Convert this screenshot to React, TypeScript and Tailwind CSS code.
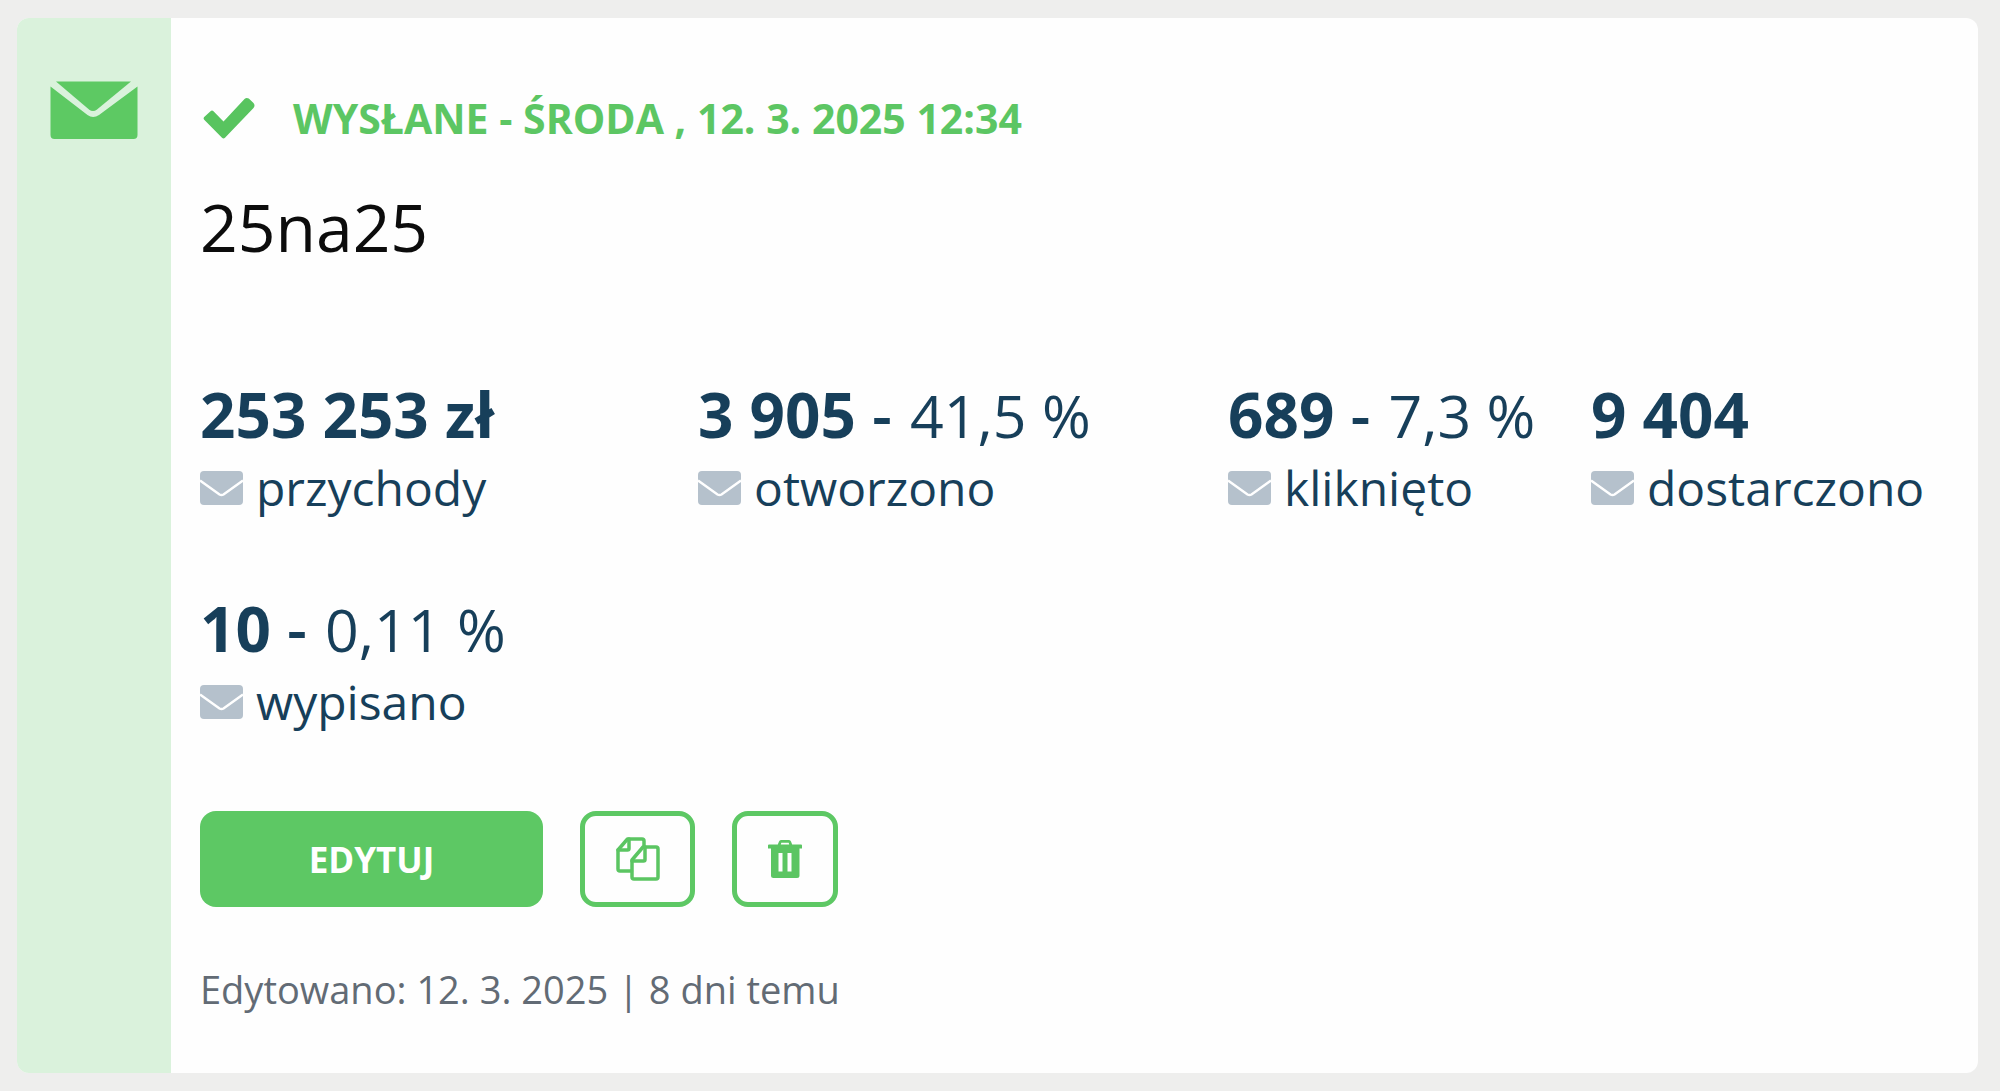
type Stat = { value: string; share?: string; label: string };

const stats: Stat[] = [
  { value: "253 253 zł", label: "przychody" },
  { value: "3 905", share: "41,5 %", label: "otworzono" },
  { value: "689", share: "7,3 %", label: "kliknięto" },
  { value: "9 404", label: "dostarczono" },
  { value: "10", share: "0,11 %", label: "wypisano" },
];

function CampaignIcon() {
  return (
    <svg className="h-[58px] w-[88px]" viewBox="0 0 88 58" fill="#5dc963" aria-hidden="true">
      <path d="M6 0.500H81L47 28.500Q43 31.500 39 28.500Z" />
      <path d="M0.500 5.500L37.500 34Q43 38 49 34L87.500 5.500V54Q87.500 58 83.500 58H4.500Q0.500 58 0.500 54Z" />
    </svg>
  );
}

function EnvelopeIcon() {
  return (
    <svg className="h-[34px] w-[43px] shrink-0" viewBox="0 0 43 34" aria-hidden="true">
      <rect width="43" height="34" rx="4" fill="#b5c1cc" />
      <path d="M0 9.500L19.500 23.500Q21.500 24.600 23.500 23.500L43 9.500" fill="none" stroke="#fff" strokeWidth="2.500" />
    </svg>
  );
}

function CheckIcon() {
  return (
    <svg className="h-[42px] w-[53px]" viewBox="0 0 53 42" fill="#58c45f" aria-hidden="true">
      <path d="M2.200 20L8.500 14.200Q10 12.800 11.500 14.200L21.500 24.500L42.500 2Q44.500 0 46.800 1.600L51.500 6Q53.500 8.500 51.500 11L23 40.800Q21.500 42.300 20 40.800L2.200 22.800Q1 21.300 2.200 20Z" />
    </svg>
  );
}

function CopyIcon() {
  return (
    <svg className="h-11 w-11" viewBox="0 0 44 44" fill="none" stroke="#5bc562" strokeWidth="3.500" strokeLinejoin="round" strokeLinecap="round" aria-hidden="true">
      <path d="M15.500 34H4Q2 34 2 32V13L11.500 2H26Q28 2 28 4V9.500" />
      <path d="M13 2V11.500Q13 13 11.500 13H2" />
      <path d="M27 10H40Q42 10 42 12V40Q42 42 40 42H18Q16 42 16 40V23Z" />
      <path d="M29 10V22.500Q29 24 27.500 24H16" />
    </svg>
  );
}

function TrashIcon() {
  return (
    <svg className="h-[38px] w-[34px]" viewBox="0 0 34 38" fill="#5bc562" aria-hidden="true">
      <path
        fillRule="evenodd"
        d="M13 0H21Q22.500 0 23 1.500L24.200 4.500H33Q34 4.500 34 5.500V8.500H31.500V35.500Q31.500 38 29 38H5.500Q3 38 3 35.500V8.500H0V5.500Q0 4.500 1 4.500H9.800L11 1.500Q11.500 0 13 0ZM13.300 2.800L12.800 4.500H21.200L20.700 2.800ZM10.500 13V31.500H14.500V13ZM19.500 13V31.500H23.500V13Z"
      />
    </svg>
  );
}

function StatItem({ value, share, label }: Stat) {
  return (
    <div className="whitespace-nowrap text-[#173f5a]">
      <dd className="text-[62px] leading-[72px]">
        <strong className="font-bold">{value}</strong>
        {share && (
          <>
            <span className="font-semibold"> - </span>
            <span className="ml-0.5 text-[59px] leading-none">{share}</span>
          </>
        )}
      </dd>
      <dt className="mt-1.5 flex items-center gap-[13px] text-[48px] leading-[64px]">
        <EnvelopeIcon />
        {label}
      </dt>
    </div>
  );
}

export default function App() {
  return (
    <main className="min-h-screen bg-[#eeeeed] pt-[18px] pr-[22px] pb-[17px] pl-[17px] font-['Open_Sans','Noto_Sans',sans-serif]">
      <article className="flex overflow-hidden rounded-xl bg-[#fefefe]">
        <div className="flex w-[154px] shrink-0 justify-center bg-[#daf2dc] pt-[63px]">
          <CampaignIcon />
        </div>

        <div className="min-w-0 flex-1 px-[29px] pt-[72px] pb-[60px]">
          <p className="flex items-center gap-[38px] pl-0.5 text-[41px] leading-[56px] font-bold text-[#5cc663]">
            <CheckIcon />
            WYSŁANE - ŚRODA , 12. 3. 2025 12:34
          </p>
          <h2 className="mt-10 text-[66px] leading-[80px] text-[#0c0c0c]">25na25</h2>

          <dl className="mt-28 grid grid-cols-[498fr_530fr_363fr_358fr] gap-y-[72px]">
            {stats.map((stat) => (
              <StatItem key={stat.label} {...stat} />
            ))}
          </dl>

          <div className="mt-[77px] flex gap-[37px]">
            <button type="button" className="h-24 w-[343px] rounded-2xl bg-[#5dc864] pt-0.5 text-[35px] font-bold text-white">
              EDYTUJ
            </button>
            <button type="button" aria-label="Kopiuj" className="flex h-24 w-[115px] items-center justify-center rounded-2xl border-5 border-[#5dc864]">
              <CopyIcon />
            </button>
            <button type="button" aria-label="Usuń" className="flex h-24 w-[106px] items-center justify-center rounded-2xl border-5 border-[#5dc864]">
              <TrashIcon />
            </button>
          </div>

          <p className="mt-[58px] text-[38px] leading-[48px] text-[#626b75]">Edytowano: 12. 3. 2025 | 8 dni temu</p>
        </div>
      </article>
    </main>
  );
}
